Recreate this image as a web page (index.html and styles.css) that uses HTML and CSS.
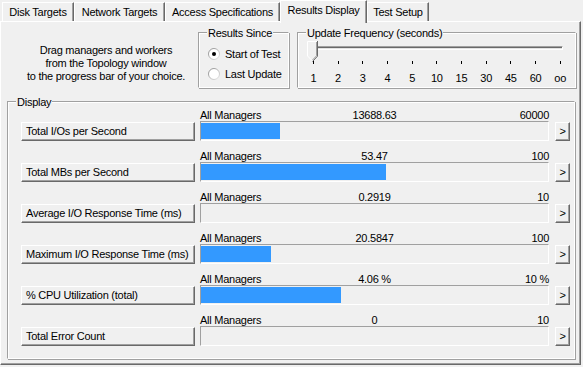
FILE: index.html
```html
<!DOCTYPE html>
<html>
<head>
<meta charset="utf-8">
<link rel="stylesheet" href="styles.css">
</head>
<body>
<div class="window">
  <div class="tabs">
    <div class="tab w1">Disk Targets</div>
    <div class="tab w2">Network Targets</div>
    <div class="tab w3">Access Specifications</div>
    <div class="tab w4 active">Results Display</div>
    <div class="tab w5">Test Setup</div>
  </div>
  <div class="panel">
    <div class="top">
      <div class="hint">Drag managers and workers<br>from the Topology window<br>to the progress bar of your choice.</div>
      <div class="group since">
        <span class="legend">Results Since</span>
        <div class="radios">
          <div class="radio">
            <svg class="rb" width="12" height="12" viewBox="0 0 12 12"><defs><linearGradient id="g1" x1="0" y1="0" x2="1" y2="1"><stop offset="0" stop-color="#8a8a8a"/><stop offset="1" stop-color="#e6e6e6"/></linearGradient></defs><circle cx="6" cy="6" r="5.5" fill="#fff" stroke="url(#g1)"/><circle cx="6" cy="6" r="2" fill="#000"/></svg>
            <span>Start of Test</span>
          </div>
          <div class="radio">
            <svg class="rb" width="12" height="12" viewBox="0 0 12 12"><defs><linearGradient id="g2" x1="0" y1="0" x2="1" y2="1"><stop offset="0" stop-color="#8a8a8a"/><stop offset="1" stop-color="#e6e6e6"/></linearGradient></defs><circle cx="6" cy="6" r="5.5" fill="#fff" stroke="url(#g2)"/></svg>
            <span>Last Update</span>
          </div>
        </div>
      </div>
      <div class="group freq">
        <span class="legend">Update Frequency (seconds)</span>
        <div class="slider">
          <div class="track"></div>
          <svg class="thumb" width="11" height="21" viewBox="0 0 11 21">
            <path d="M0.5 0.5 H10.5 V15 L5.5 20.5 L0.5 15 Z" fill="#f0f0f0"/>
            <path d="M0.5 15 V0.5 H10" fill="none" stroke="#fff"/>
            <path d="M10.5 0 V15.2 L5.5 20.5" fill="none" stroke="#696969"/>
            <path d="M9.5 1 V14.8 L5.5 19" fill="none" stroke="#a0a0a0"/>
            <path d="M0.5 15 L5 19.5" fill="none" stroke="#fff"/>
          </svg>
          <div class="ticks"><i></i><i></i><i></i><i></i><i></i><i></i><i></i><i></i><i></i><i></i><i></i></div>
          <div class="scale"><span>1</span><span>2</span><span>3</span><span>4</span><span>5</span><span>10</span><span>15</span><span>30</span><span>45</span><span>60</span><span>oo</span></div>
        </div>
      </div>
    </div>
    <div class="group display">
      <span class="legend">Display</span>
      <div class="row">
        <div class="lbl"><span>All Managers</span><span>13688.63</span><span>60000</span></div>
        <button class="metric">Total I/Os per Second</button>
        <div class="bar"><div class="fill" style="width:79px"></div></div>
        <button class="more">&gt;</button>
      </div>
      <div class="row">
        <div class="lbl"><span>All Managers</span><span>53.47</span><span>100</span></div>
        <button class="metric">Total MBs per Second</button>
        <div class="bar"><div class="fill" style="width:185px"></div></div>
        <button class="more">&gt;</button>
      </div>
      <div class="row">
        <div class="lbl"><span>All Managers</span><span>0.2919</span><span>10</span></div>
        <button class="metric">Average I/O Response Time (ms)</button>
        <div class="bar"><div class="fill" style="width:0px"></div></div>
        <button class="more">&gt;</button>
      </div>
      <div class="row">
        <div class="lbl"><span>All Managers</span><span>20.5847</span><span>100</span></div>
        <button class="metric">Maximum I/O Response Time (ms)</button>
        <div class="bar"><div class="fill" style="width:70px"></div></div>
        <button class="more">&gt;</button>
      </div>
      <div class="row">
        <div class="lbl"><span>All Managers</span><span>4.06 %</span><span>10 %</span></div>
        <button class="metric">% CPU Utilization (total)</button>
        <div class="bar"><div class="fill" style="width:140px"></div></div>
        <button class="more">&gt;</button>
      </div>
      <div class="row">
        <div class="lbl"><span>All Managers</span><span>0</span><span>10</span></div>
        <button class="metric">Total Error Count</button>
        <div class="bar"><div class="fill" style="width:0px"></div></div>
        <button class="more">&gt;</button>
      </div>
    </div>
  </div>
</div>
</body>
</html>
```

FILE: styles.css
```css
* { box-sizing: border-box; }
html, body { margin: 0; padding: 0; }
body {
  background: #f0f0f0;
  font-family: "Liberation Sans", Arial, sans-serif;
  font-size: 11px;
  letter-spacing: -0.25px;
  color: #000;
  width: 583px;
  height: 367px;
  overflow: hidden;
}
.window { width: 583px; }

.tabs {
  display: flex;
  height: 21px;
  padding-left: 2px;
  align-items: flex-start;
}
.tab {
  margin-top: 2px;
  height: 19px;
  line-height: 19px;
  text-align: center;
  background: #f0f0f0;
  border-top: 1px solid #fff;
  border-left: 1px solid #fff;
  border-right: 1px solid #696969;
  box-shadow: inset -1px 0 #a0a0a0;
  white-space: nowrap;
}
.w1 { width: 72px; }
.w2 { width: 91px; }
.w3 { width: 115px; }
.w4 { width: 87px; }
.w5 { width: 62px; }
.tab.active {
  margin-top: 0;
  height: 23px;
  line-height: 19px;
  position: relative;
  z-index: 2;
}

.panel {
  width: 581px;
  height: 344px;
  border-top: 1px solid #fff;
  border-left: 1px solid #fff;
  border-right: 1px solid #696969;
  border-bottom: 1px solid #696969;
  box-shadow: inset -1px -1px #a0a0a0;
  padding: 10px 0 0 6px;
}

.top {
  display: flex;
  height: 57px;
}
.hint {
  width: 191px;
  padding: 12px 0 0 7px;
  text-align: center;
  line-height: 13px;
}

.group {
  position: relative;
  border: 1px solid #a0a0a0;
  border-right-color: #fff;
  border-bottom-color: #fff;
  box-shadow: inset 1px 1px #fff, 1px 1px #a0a0a0;
}
.legend {
  position: absolute;
  top: -6px;
  left: 8px;
  padding: 0 1px;
  background: #f0f0f0;
  line-height: 13px;
  white-space: nowrap;
}
.since { width: 91px; height: 56px; margin-right: 8px; }
.freq { width: 279px; height: 56px; }

.radios {
  display: flex;
  flex-direction: column;
  gap: 7px;
  padding: 14px 0 0 9px;
}
.radio {
  display: flex;
  align-items: center;
  gap: 5px;
  height: 13px;
  line-height: 13px;
}
.radio span { padding-top: 1px; }
.rb { display: block; flex: none; }

.slider {
  position: relative;
  padding-top: 13px;
}
.track {
  margin-left: 15px;
  width: 250px;
  height: 4px;
  border-top: 1px solid #a0a0a0;
  border-left: 1px solid #a0a0a0;
  border-bottom: 1px solid #fff;
  border-right: 1px solid #fff;
  background: #e3e3e3;
  box-shadow: inset 1px 1px #696969;
}
.thumb {
  position: absolute;
  left: 9px;
  top: 8px;
  display: block;
}
.ticks, .scale {
  display: grid;
  grid-template-columns: repeat(11, 24.7px);
  margin-left: 3px;
}
.ticks {
  margin-top: 11px;
  height: 3px;
}
.ticks i {
  display: block;
  width: 1px;
  height: 3px;
  background: #000;
  justify-self: center;
}
.scale {
  margin-top: 8px;
  line-height: 13px;
  text-align: center;
}

.display {
  width: 568px;
  height: 258px;
  margin-top: 12px;
  padding: 6px 0 0 13px;
}
.row {
  display: grid;
  grid-template-columns: 174px 349px 21px;
  grid-template-rows: 13px 20px;
  column-gap: 5px;
  margin-bottom: 8px;
}
.lbl {
  grid-column: 2;
  grid-row: 1;
  align-self: end;
  display: grid;
  grid-template-columns: 1fr auto 1fr;
  line-height: 11px;
  white-space: nowrap;
}
.lbl span:nth-child(1) { justify-self: start; }
.lbl span:nth-child(2) { justify-self: center; }
.lbl span:nth-child(3) { justify-self: end; }

.metric, .more {
  font-family: inherit;
  font-size: 11px;
  letter-spacing: -0.25px;
  color: #000;
  background: #f0f0f0;
  border: 1px solid;
  border-color: #fff #696969 #696969 #fff;
  box-shadow: inset -1px -1px #a0a0a0;
  margin: 1px 0 0 0;
  height: 19px;
  border-radius: 0;
}
.metric {
  grid-column: 1;
  grid-row: 2;
  text-align: left;
  padding: 0 0 1px 4px;
  white-space: nowrap;
}
.more {
  grid-column: 3;
  grid-row: 2;
  width: 15px;
  margin-left: 1px;
  padding: 0 0 1px 0;
  text-align: center;
}
.bar {
  grid-column: 2;
  grid-row: 2;
  height: 20px;
  border: 1px solid;
  border-color: #a0a0a0 #fff #fff #a0a0a0;
  padding: 1px 1px 1px 0;
  background: #f0f0f0;
}
.fill {
  height: 100%;
  background: #3399ff;
}
```
